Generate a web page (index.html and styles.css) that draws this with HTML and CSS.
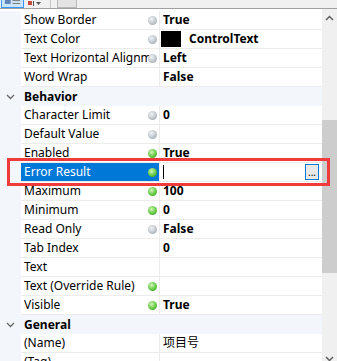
FILE: index.html
```html
<!doctype html>
<html lang="en">
<head>
  <meta charset="utf-8"/>
  <title>Properties</title>
  <link rel="stylesheet" href="styles.css">
</head>
<body>
  <div class="grid">
    <header class="toolbar">
      <span class="tool tool-on">
        <svg width="20" height="7" viewBox="0 0 20 7">
          <rect x="2" y="0" width="6" height="5" fill="#5d82b8"/>
          <rect x="10" y="1" width="8" height="1" fill="#777"/>
          <rect x="10" y="4" width="8" height="1" fill="#777"/>
        </svg>
      </span>
      <span class="tool">
        <svg width="14" height="7" viewBox="0 0 14 7">
          <rect x="0" y="0" width="4" height="4" fill="#c64a3c"/>
          <rect x="5" y="0" width="1" height="5" fill="#555"/>
          <path d="M8 1 h5 l-2.5 3 z" fill="#555"/>
        </svg>
      </span>
      <span class="tool-sep"></span>
      <span class="tool tool-page"></span>
    </header>

    <main class="panel">
      <section class="rows">
        <div class="row"><i class="gutter"></i><div class="name"><span class="label">Show Border</span><b class="dot dot-gray"></b></div><div class="value">True</div></div>
        <div class="row"><i class="gutter"></i><div class="name"><span class="label">Text Color</span><b class="dot dot-gray"></b></div><div class="value"><span class="swatch"></span>ControlText</div></div>
        <div class="row"><i class="gutter"></i><div class="name"><span class="label">Text Horizontal Alignm</span><b class="dot dot-gray"></b></div><div class="value">Left</div></div>
        <div class="row"><i class="gutter"></i><div class="name"><span class="label">Word Wrap</span></div><div class="value">False</div></div>

        <div class="cat">
          <svg class="chevron" width="9" height="6" viewBox="0 0 9 6"><path d="M1 1 L4.5 4.5 L8 1" fill="none" stroke="#666" stroke-width="1.3"/></svg>
          <span>Behavior</span>
        </div>
        <div class="row"><i class="gutter"></i><div class="name"><span class="label">Character Limit</span><b class="dot dot-gray"></b></div><div class="value">0</div></div>
        <div class="row"><i class="gutter"></i><div class="name"><span class="label">Default Value</span><b class="dot dot-gray"></b></div><div class="value"></div></div>
        <div class="row"><i class="gutter"></i><div class="name"><span class="label">Enabled</span><b class="dot dot-green"></b></div><div class="value">True</div></div>
        <div class="row row-selected"><i class="gutter"></i><div class="name"><span class="label">Error Result</span><b class="dot dot-green"></b></div><div class="value editor"><span class="caret"></span><button class="ellipsis">...</button></div></div>
        <div class="row"><i class="gutter"></i><div class="name"><span class="label">Maximum</span><b class="dot dot-green"></b></div><div class="value">100</div></div>
        <div class="row"><i class="gutter"></i><div class="name"><span class="label">Minimum</span><b class="dot dot-green"></b></div><div class="value">0</div></div>
        <div class="row"><i class="gutter"></i><div class="name"><span class="label">Read Only</span><b class="dot dot-gray"></b></div><div class="value">False</div></div>
        <div class="row"><i class="gutter"></i><div class="name"><span class="label">Tab Index</span></div><div class="value">0</div></div>
        <div class="row"><i class="gutter"></i><div class="name"><span class="label">Text</span></div><div class="value"></div></div>
        <div class="row"><i class="gutter"></i><div class="name"><span class="label">Text (Override Rule)</span><b class="dot dot-green"></b></div><div class="value"></div></div>
        <div class="row"><i class="gutter"></i><div class="name"><span class="label">Visible</span><b class="dot dot-green"></b></div><div class="value">True</div></div>

        <div class="cat">
          <svg class="chevron" width="9" height="6" viewBox="0 0 9 6"><path d="M1 1 L4.5 4.5 L8 1" fill="none" stroke="#666" stroke-width="1.3"/></svg>
          <span>General</span>
        </div>
        <div class="row"><i class="gutter"></i><div class="name"><span class="label">(Name)</span></div><div class="value value-plain">项目号</div></div>
        <div class="row"><i class="gutter"></i><div class="name"><span class="label">(Tag)</span></div><div class="value"></div></div>
      </section>

      <aside class="scrollbar">
        <div class="arrow">
          <svg width="9" height="6" viewBox="0 0 9 6"><path d="M1 5 L4.5 1.5 L8 5" fill="none" stroke="#606060" stroke-width="1.5"/></svg>
        </div>
        <div class="track"><div class="thumb"></div></div>
        <div class="arrow">
          <svg width="9" height="6" viewBox="0 0 9 6"><path d="M1 1 L4.5 4.5 L8 1" fill="none" stroke="#606060" stroke-width="1.5"/></svg>
        </div>
      </aside>
    </main>

    <div class="highlight"></div>
  </div>
</body>
</html>
```

FILE: styles.css
```css
:root {
  --grid-line: solid 1px #ececec;
  --gutter: #f3f6fa;
  --selected: #0078d7;
}
* { margin: 0; padding: 0; box-sizing: border-box; }
html, body { height: 100%; overflow: hidden; background-color: #fff; }
body { font-family: "Noto Sans", "Noto Sans CJK SC", sans-serif; font-size: 12px; color: #000; }

.grid { position: relative; height: 367px; display: flex; flex-direction: column; }

/* toolbar, only its lower edge is visible */
.toolbar { flex: none; height: 9px; display: flex; align-items: flex-end; background-color: #f0f0f0; border-bottom: solid 1px #a0a0a0; overflow: hidden; }
.tool { display: flex; height: 8px; margin-left: 4px; align-items: flex-end; }
.tool-on { width: 23px; margin-left: 1px; padding: 0 1px 1px 1px; background-color: #cce4f7; border: solid 1px #3399ff; border-top: none; }
.tool-sep { width: 1px; height: 8px; margin-left: 8px; background-color: #c8c8c8; }
.tool-page { width: 20px; margin-left: 6px; background-color: #e4e4e4; border: solid 1px #b8b8b8; border-top: none; }

.panel { flex: 1; display: flex; min-height: 0; }
.rows { flex: 1; padding-top: 2px; overflow: hidden; }

.row { display: flex; height: 19px; }
.gutter { width: 21px; flex: none; background-color: var(--gutter); }
.name {
  width: 139px; flex: none; display: flex; align-items: center;
  padding-left: 3px; border-right: var(--grid-line); border-bottom: var(--grid-line);
  overflow: hidden;
}
.label { flex: 1; min-width: 0; white-space: nowrap; overflow: hidden; line-height: 18px; }
.value {
  flex: 1; min-width: 0; display: flex; align-items: center;
  padding-left: 3px; border-bottom: var(--grid-line);
  font-weight: bold; white-space: nowrap; line-height: 18px;
}
.value-plain { font-weight: normal; }

.dot { width: 9px; height: 9px; flex: none; margin: 0 2px 0 -3px; border-radius: 50%; }
.dot-gray { background: radial-gradient(circle at 40% 35%, #f2f4f6 0, #bec5cb 55%, #8f989f 100%); }
.dot-green { background: radial-gradient(circle at 40% 35%, #d4f7b8 0, #62c843 55%, #2f8f1e 100%); }

.swatch { width: 20px; height: 16px; margin-left: -2px; margin-right: 8px; background-color: #000; }

.row-selected .name { background-color: var(--selected); color: #fff; }
.editor { justify-content: space-between; padding-right: 3px; }
.caret { width: 1px; height: 14px; background-color: #000; }
.ellipsis {
  width: 14px; height: 16px; font: inherit; font-size: 10px; font-weight: normal; line-height: 12px;
  background-color: #e9e9e9; border: solid 1px var(--selected); color: #000;
}

.cat { display: flex; align-items: center; height: 19px; background-color: var(--gutter); font-weight: bold; }
.chevron { margin-left: 6px; margin-right: 9px; }

.scrollbar { width: 15px; flex: none; display: flex; flex-direction: column; background-color: #f0f0f0; }
.arrow { height: 17px; flex: none; display: flex; align-items: center; justify-content: center; }
.track { flex: 1; }
.thumb { height: 153px; margin-top: 94px; background-color: #cdcdcd; }

.highlight { position: absolute; left: 7px; top: 158px; width: 323px; height: 28px; border: solid 3px #ef3b3b; }
```
